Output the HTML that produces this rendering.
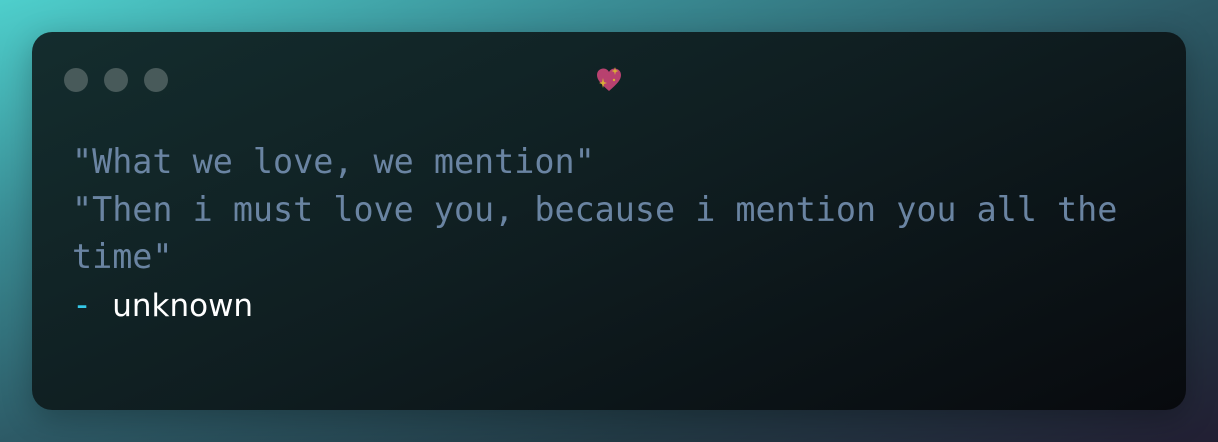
<!DOCTYPE html>
<html><head><meta charset="utf-8"><style>
html,body{margin:0;padding:0;}
body{width:1218px;height:442px;overflow:hidden;background:linear-gradient(160deg,#4ecfcc 0%,#3a8d95 25%,#2d5a66 50%,#223a45 75%,#221f33 100%);position:relative;}
.card{position:absolute;left:32px;top:32px;width:1154px;height:378px;border-radius:20px;background:linear-gradient(155deg,#142d2e 0%,#0f1d20 50%,#080a0e 100%);box-shadow:0 8px 30px rgba(0,0,0,.25);}
.dot{position:absolute;top:36px;width:24px;height:24px;border-radius:50%;background:#485a5a;}
.txt{position:absolute;left:40px;top:106px;font-family:"DejaVu Sans Mono",monospace;font-size:33.4px;line-height:47.5px;color:#6a84a2;white-space:pre;}
.author{color:#fff;font-family:"DejaVu Sans",sans-serif;font-size:31px;}
.dash{color:#35c8e8;}
</style></head><body>
<div class="card">
<div class="dot" style="left:32px"></div>
<div class="dot" style="left:72px"></div>
<div class="dot" style="left:112px"></div>
<svg style="position:absolute;left:563px;top:34px" width="28" height="28" viewBox="0 0 28 28">
<path d="M14 25 C6 18 2 14 2 9 C2 5 5 2.5 8.5 2.5 C11 2.5 13 4 14 6 C15 4 17 2.5 19.5 2.5 C23 2.5 26 5 26 9 C26 14 22 18 14 25Z" fill="#b8416f"/>
<path d="M8 12 L9 16 L12 17 L9 18 L8 22 L7 18 L4 17 L7 16Z" fill="#d9ad36"/>
<path d="M20 1 L20.8 4 L23.5 5 L20.8 6 L20 9 L19.2 6 L16.5 5 L19.2 4Z" fill="#d9ad36"/>
<circle cx="19" cy="14" r="1.2" fill="#d9ad36"/>
</svg>
<div class="txt">"What we love, we mention"
"Then i must love you, because i mention you all the
time"
<span class="dash">-</span> <span class="author">unknown</span></div>
</div>
</body></html>
